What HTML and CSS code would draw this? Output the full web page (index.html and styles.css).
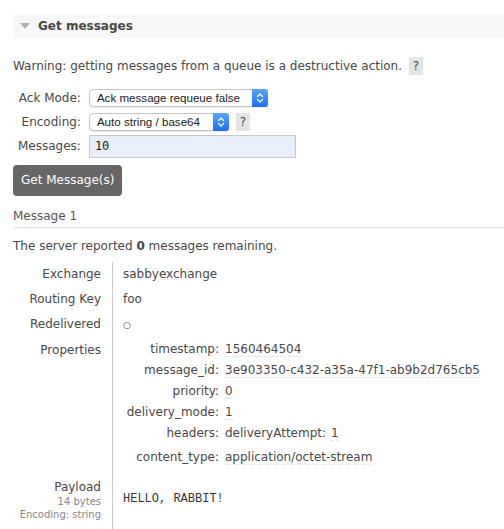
FILE: index.html
```html
<!DOCTYPE html>
<html>
<head>
<meta charset="utf-8">
<link rel="stylesheet" href="styles.css">
</head>
<body>
<div class="page">
  <div class="sec-head"><span class="tri"></span><span class="sec-title">Get messages</span></div>
  <div class="sec-body">
    <p class="warn">Warning: getting messages from a queue is a destructive action. <span class="help">?</span></p>
    <table class="form">
      <tr>
        <th>Ack Mode:</th>
        <td><span class="select sel-ack"><span class="sel-text">Ack message requeue false</span><span class="sel-arrow"><svg width="8" height="12" viewBox="0 0 8 12"><path d="M1.5 4.5 L4 2 L6.5 4.5 M1.5 7.5 L4 10 L6.5 7.5" fill="none" stroke="#fff" stroke-width="1.3" stroke-linecap="round" stroke-linejoin="round"/></svg></span></span></td>
      </tr>
      <tr>
        <th>Encoding:</th>
        <td><span class="select sel-enc"><span class="sel-text">Auto string / base64</span><span class="sel-arrow"><svg width="8" height="12" viewBox="0 0 8 12"><path d="M1.5 4.5 L4 2 L6.5 4.5 M1.5 7.5 L4 10 L6.5 7.5" fill="none" stroke="#fff" stroke-width="1.3" stroke-linecap="round" stroke-linejoin="round"/></svg></span></span> <span class="help">?</span></td>
      </tr>
      <tr>
        <th>Messages:</th>
        <td><span class="input">10</span></td>
      </tr>
    </table>
    <div class="btn-row"><span class="btn">Get Message(s)</span></div>
    <div class="msg-title">Message 1</div>
    <p class="remaining">The server reported <b>0</b> messages remaining.</p>
    <table class="facts">
      <tr><th>Exchange</th><td>sabbyexchange</td></tr>
      <tr><th>Routing Key</th><td>foo</td></tr>
      <tr><th>Redelivered</th><td><span class="circ">○</span></td></tr>
      <tr><th>Properties</th>
        <td>
          <table class="props">
            <tr><th>timestamp:</th><td><span class="val">1560464504</span></td></tr>
            <tr><th>message_id:</th><td><span class="val">3e903350-c432-a35a-47f1-ab9b2d765cb5</span></td></tr>
            <tr><th>priority:</th><td><span class="val">0</span></td></tr>
            <tr><th>delivery_mode:</th><td><span class="val">1</span></td></tr>
            <tr><th>headers:</th><td><table class="hdrs"><tr><th>deliveryAttempt:</th><td><span class="val">1</span></td></tr></table></td></tr>
            <tr class="last"><th>content_type:</th><td><span class="val">application/octet-stream</span></td></tr>
          </table>
        </td>
      </tr>
      <tr class="payload-row"><th>Payload<div class="sub">14 bytes</div><div class="sub">Encoding: string</div></th>
        <td><pre class="payload">HELLO, RABBIT!</pre></td></tr>
    </table>
  </div>
</div>
</body>
</html>
```

FILE: styles.css
```css
html, body {
  margin: 0;
  padding: 0;
  background: #fff;
}
body {
  font-family: "DejaVu Sans", Verdana, sans-serif;
  font-size: 12px;
  color: #484848;
}
.page {
  padding: 14px 0 0 13px;
}
.sec-head {
  display: flex;
  align-items: center;
  height: 24px;
  background: #f7f7f7;
  padding-left: 7px;
}
.tri {
  width: 0;
  height: 0;
  border-left: 5px solid transparent;
  border-right: 5px solid transparent;
  border-top: 6px solid #b0b0b0;
  margin-right: 8px;
}
.sec-title {
  font-weight: bold;
  font-size: 12px;
  color: #484848;
}
.warn {
  margin: 18px 0 0 0;
  line-height: 20px;
  font-size: 12px;
}
.help {
  display: inline-block;
  background: #e4e4e4;
  color: #484848;
  padding: 0 4px;
  line-height: 18px;
  margin-left: 3px;
}
.form {
  border-collapse: collapse;
  margin-top: 10px;
}
.form th {
  font-weight: normal;
  text-align: right;
  padding: 0 8px 0 5px;
  height: 24px;
  white-space: nowrap;
}
.form td {
  padding: 0;
  white-space: nowrap;
}
.select {
  display: inline-flex;
  align-items: stretch;
  vertical-align: middle;
  height: 16px;
  border: 1px solid #c4c4c4;
  border-radius: 4px;
  background: #fff;
  font-family: "Liberation Sans", Arial, sans-serif;
  font-size: 11.6px;
  color: #222;
  box-shadow: 0 1px 1px rgba(0,0,0,0.08);
}
.sel-text {
  padding: 0 8px 0 7px;
  line-height: 16px;
  flex: 1;
}
.sel-ack { width: 177px; }
.sel-enc { width: 138px; }
.sel-arrow {
  width: 16px;
  display: flex;
  align-items: center;
  justify-content: center;
  background: linear-gradient(#5aa6fb, #1b6ef3);
  border-radius: 0 3px 3px 0;
  margin: -1px -1px -1px 0;
}
.input {
  display: inline-block;
  vertical-align: middle;
  width: 200px;
  height: 21px;
  line-height: 21px;
  padding-left: 5px;
  border: 1px solid #c8c8c8;
  background: #e8effa;
  font-family: "DejaVu Sans Mono", monospace;
  font-size: 12px;
  color: #222;
}
.btn-row {
  margin-top: 7px;
}
.btn {
  display: inline-block;
  background: #666;
  color: #fff;
  border-radius: 4px;
  padding: 0 8px;
  height: 31px;
  line-height: 31px;
  font-size: 12px;
}
.msg-title {
  margin-top: 12px;
  padding-bottom: 3px;
  border-bottom: 1px solid #ddd;
  color: #555;
  line-height: 16px;
}
.remaining {
  margin: 10px 0 0 0;
  line-height: 16px;
}
.facts {
  border-collapse: collapse;
  margin-top: 8px;
}
.facts > tbody > tr > th {
  font-weight: normal;
  text-align: right;
  vertical-align: top;
  width: 88px;
  padding: 4px 11px 5px 0;
  border-right: 1px solid #ccc;
  line-height: 16px;
  white-space: nowrap;
}
.facts > tbody > tr > td {
  padding: 4px 0 5px 10px;
  line-height: 16px;
  vertical-align: top;
}
.circ {
  font-size: 9px;
}
.props {
  border-collapse: collapse;
  margin-top: -4px;
}
.props th {
  font-weight: normal;
  text-align: right;
  width: 93px;
  padding: 0 6px 0 3px;
  height: 21px;
  white-space: nowrap;
  vertical-align: middle;
}
.props td {
  padding: 0;
  white-space: nowrap;
}
.props tr.last th,
.props tr.last td {
  padding-top: 3px;
}
.hdrs {
  border-collapse: collapse;
}
.hdrs th {
  font-weight: normal;
  padding: 0 5px 0 0;
}
.hdrs td { padding: 0; }
.val {
  border-bottom: 1px dotted #ddd;
}
.sub {
  font-size: 10px;
  color: #888;
  line-height: 13px;
}
.payload-row > th,
.payload-row > td {
  padding-top: 7px !important;
}
.payload {
  margin: 12px 0 0 0;
  font-family: "Liberation Mono", monospace;
  font-size: 12px;
  color: #333;
  padding-bottom: 20px;
}
```
